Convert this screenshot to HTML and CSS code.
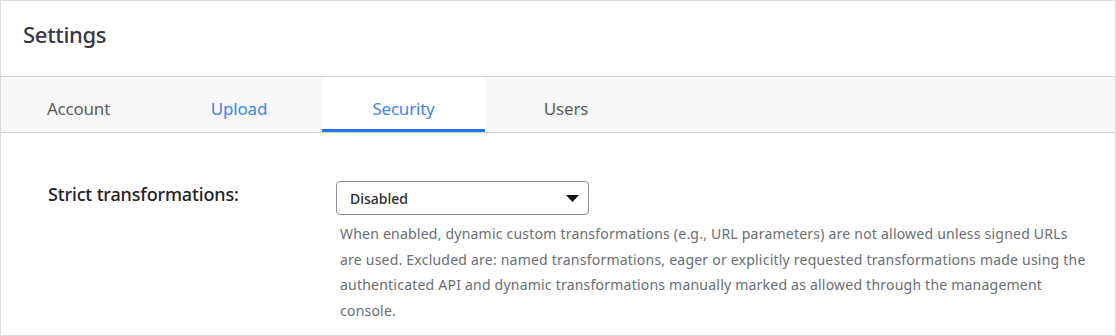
FILE: index.html
```html
<!DOCTYPE html>
<html lang="en">
<head>
<meta charset="utf-8">
<title>Settings</title>
<link rel="stylesheet" href="styles.css">
</head>
<body>
<div class="panel">
  <header class="header">
    <h1 class="title">Settings</h1>
  </header>
  <nav class="tabs">
    <div class="tab tab-account">Account</div>
    <div class="tab tab-upload link">Upload</div>
    <div class="tab tab-security active">Security</div>
    <div class="tab tab-users">Users</div>
  </nav>
  <section class="content">
    <div class="field">
      <div class="label">Strict transformations:</div>
      <div class="control">
        <div class="select">
          <span class="select-value">Disabled</span>
          <svg class="caret" width="13" height="7" viewBox="0 0 13 7"><path d="M0 0H13L6.5 7Z" fill="#111"/></svg>
        </div>
        <p class="help">When enabled, dynamic custom transformations (e.g., URL parameters) are not allowed unless signed URLs are used. Excluded are: named transformations, eager or explicitly requested transformations made using the authenticated API and dynamic transformations manually marked as allowed through the management console.</p>
      </div>
    </div>
  </section>
</div>
</body>
</html>
```
FILE: styles.css
```css
* { box-sizing: border-box; }
html, body { margin: 0; padding: 0; background: #fff; }
body { font-family: "Noto Sans", "Open Sans", sans-serif; }
.panel {
  width: 1116px;
  height: 336px;
  border: 1px solid #dcdcdc;
  display: flex;
  flex-direction: column;
  overflow: hidden;
}
.header {
  height: 76px;
  border-bottom: 1px solid #d4d4d4;
  display: flex;
  align-items: center;
  padding: 0 0 10px 22px;
}
.title {
  margin: 0;
  font-size: 22px;
  font-weight: 500;
  color: #333840;
  letter-spacing: -0.3px;
}
.tabs {
  height: 56px;
  background: #f8f8f8;
  border-bottom: 1px solid #d4d4d4;
  display: flex;
}
.tab {
  display: flex;
  align-items: center;
  justify-content: center;
  font-size: 17px;
  color: #5b5f66;
  border-bottom: 3px solid transparent;
  padding-top: 11px;
  letter-spacing: -0.2px;
}
.tab-account { width: 155px; }
.tab-upload { width: 166px; }
.tab-security { width: 163px; }
.tab-users { width: 162px; }
.link { color: #3a87ee; }
.active { background: #fff; color: #3a87ee; border-bottom-color: #1d74ec; }
.content {
  flex: 1;
  padding: 48px 0 0 47px;
}
.field { display: flex; }
.label {
  width: 288px;
  font-size: 18px;
  font-weight: 500;
  color: #1f2226;
  padding-top: 1px;
  letter-spacing: -0.15px;
}
.control { width: 754px; }
.select {
  width: 253px;
  height: 34px;
  border: 1px solid #8b9099;
  border-radius: 4px;
  display: flex;
  align-items: center;
  justify-content: space-between;
  padding: 0 9px 0 13px;
}
.select-value { font-size: 14px; color: #2b2e33; font-weight: 500; }
.caret { display: block; }
.help {
  margin: 6px 0 0 4px;
  font-size: 14px;
  line-height: 25.6px;
  color: #6a6e75;
  letter-spacing: 0.22px;
}
```
